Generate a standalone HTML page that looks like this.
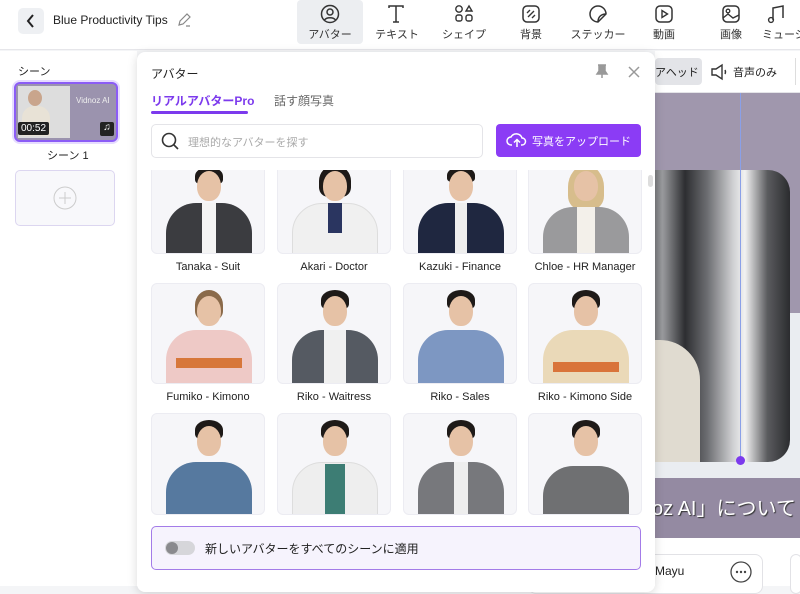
<!DOCTYPE html>
<html><head><meta charset="utf-8"><style>
*{box-sizing:border-box;margin:0;padding:0}
body{width:800px;height:586px;overflow:hidden;background:#f4f5f7;font-family:"Liberation Sans","Noto Sans CJK JP",sans-serif;position:relative;color:#222}
.abs{position:absolute}
.top{left:0;top:0;width:800px;height:50px;background:#fff;border-bottom:1px solid #e6e6ea}
.tool{position:absolute;top:0;height:44px;width:66px;text-align:center;font-size:11px;color:#333}
.tool svg{display:block;margin:4px auto 2px}
.card{position:absolute;width:114px;background:#f6f6f9;border:1px solid #ececf2;border-radius:6px;overflow:hidden}
.lbl{position:absolute;width:126px;text-align:center;font-size:11px;color:#222}
.head{position:absolute;border-radius:50% 50% 46% 46%;background:#e6c2a6}
.hair{position:absolute;background:#1e1a18;border-radius:50% 50% 30% 30%}
.body{position:absolute;border-radius:30px 30px 0 0}
</style></head><body>
<div class="abs top"></div>
<div class="abs" style="left:18px;top:8px;width:26px;height:26px;background:#eef0f3;border-radius:5px"></div>
<svg class="abs" style="left:24px;top:13px" width="14" height="16"><path d="M9 2L4 8l5 6" stroke="#222" stroke-width="2" fill="none"/></svg>
<div class="abs" style="left:53px;top:13px;font-size:12px">Blue Productivity Tips</div>
<svg class="abs" style="left:176px;top:12px" width="16" height="16"><path d="M3 13l1-4 7-7 3 3-7 7z M10 14h4" stroke="#888" stroke-width="1.2" fill="none"/></svg>
<div class="tool" style="left:297px;background:#eceef1;border-radius:4px;height:44px"><svg width="20" height="20"><circle cx="10" cy="10" r="8.5" stroke="#333" stroke-width="1.5" fill="none"/><circle cx="10" cy="8" r="3" stroke="#333" stroke-width="1.5" fill="none"/><path d="M4.5 16c2-3 9-3 11 0" stroke="#333" stroke-width="1.5" fill="none"/></svg>アバター</div>
<div class="tool" style="left:364px"><svg width="20" height="20"><path d="M2 4V2h14v2M9 2v16M6 18h6" stroke="#333" stroke-width="1.5" fill="none"/></svg>テキスト</div>
<div class="tool" style="left:431px"><svg width="20" height="20"><circle cx="5" cy="5" r="3.2" stroke="#333" stroke-width="1.4" fill="none"/><path d="M15 2l3 5h-6z" stroke="#333" stroke-width="1.4" fill="none"/><rect x="2" y="11" width="6" height="6" rx="2" stroke="#333" stroke-width="1.4" fill="none"/><rect x="12" y="11" width="6" height="6" rx="2" stroke="#333" stroke-width="1.4" fill="none"/></svg>シェイプ</div>
<div class="tool" style="left:498px"><svg width="20" height="20"><rect x="2" y="2" width="16" height="16" rx="4" stroke="#333" stroke-width="1.5" fill="none"/><path d="M7 13l6-6M6 9l3-3M11 14l3-3" stroke="#333" stroke-width="1.4"/></svg>背景</div>
<div class="tool" style="left:565px"><svg width="20" height="20"><path d="M18 10a8 8 0 1 0-8 8l8-8z M10 18c0-5 3-8 8-8" stroke="#333" stroke-width="1.5" fill="none"/></svg>ステッカー</div>
<div class="tool" style="left:631px"><svg width="20" height="20"><rect x="2" y="2" width="16" height="16" rx="4" stroke="#333" stroke-width="1.5" fill="none"/><path d="M8 6.5v7l5.5-3.5z" stroke="#333" stroke-width="1.4" fill="none"/></svg>動画</div>
<div class="tool" style="left:698px"><svg width="20" height="20"><rect x="2" y="2" width="16" height="16" rx="4" stroke="#333" stroke-width="1.5" fill="none"/><circle cx="7" cy="7" r="1.8" stroke="#333" stroke-width="1.3" fill="none"/><path d="M2 14l5-4 5 4 6-3" stroke="#333" stroke-width="1.4" fill="none"/></svg>画像</div>
<div class="tool" style="left:762px;text-align:left"><svg width="20" height="20" style="margin-left:4px"><path d="M7 16V4l10-2v12" stroke="#333" stroke-width="1.5" fill="none"/><circle cx="5" cy="16" r="2.4" stroke="#333" stroke-width="1.4" fill="none"/></svg>ミュージ</div>

<!-- left sidebar -->
<div class="abs" style="left:0;top:51px;width:137px;height:535px;background:#fff"></div>
<div class="abs" style="left:18px;top:63px;font-size:11px">シーン</div>
<div class="abs" style="left:14px;top:82px;width:104px;height:60px;border:2px solid #8b5cf6;border-radius:6px;background:#9b93ae;overflow:hidden;box-shadow:0 0 0 2px #e6dcff">
 <div class="abs" style="left:2px;top:2px;width:52px;height:52px;background:#ddd"></div>
 <div class="abs" style="left:12px;top:6px;width:14px;height:16px;border-radius:50%;background:#c9a58c"></div>
 <div class="abs" style="left:6px;top:22px;width:28px;height:30px;border-radius:12px 12px 0 0;background:#e8e2d6"></div>
 <div class="abs" style="left:60px;top:12px;font-size:8px;color:#eee">Vidnoz AI</div>
 <div class="abs" style="left:2px;top:38px;background:#222;color:#fff;font-size:10px;padding:1px 3px;border-radius:2px">00:52</div>
 <div class="abs" style="left:84px;top:38px;width:14px;height:14px;background:#222;color:#fff;font-size:10px;text-align:center;border-radius:2px">♫</div>
</div>
<div class="abs" style="left:47px;top:147px;font-size:11px">シーン 1</div>
<div class="abs" style="left:15px;top:170px;width:100px;height:56px;border:1px solid #dcd6f0;border-radius:5px;background:#f8f8fb"></div>
<svg class="abs" style="left:53px;top:186px" width="24" height="24"><circle cx="12" cy="12" r="11" stroke="#ccc" fill="none"/><path d="M12 6v12M6 12h12" stroke="#ccc"/></svg>

<!-- right area -->
<div class="abs" style="left:655px;top:51px;width:145px;height:42px;background:#fff;border-bottom:1px solid #e4e4e8"></div>
<div class="abs" style="left:655px;top:58px;width:47px;height:27px;background:#e3e4e8;border-radius:4px;font-size:11px;padding:6px 0 0 0">アヘッド</div>
<svg class="abs" style="left:710px;top:63px" width="20" height="18"><path d="M2 6h4l6-4v14l-6-4H2z" stroke="#333" stroke-width="1.4" fill="none"/><path d="M15 7q1 2 0 4" stroke="#333" stroke-width="1.4" fill="none"/></svg>
<div class="abs" style="left:733px;top:64px;font-size:11px">音声のみ</div>
<div class="abs" style="left:795px;top:58px;width:1px;height:27px;background:#ddd"></div>
<div class="abs" style="left:655px;top:93px;width:145px;height:220px;background:#a097ad"></div>
<div class="abs" style="left:655px;top:313px;width:145px;height:165px;background:#eaedf1"></div>
<div class="abs" style="left:640px;top:170px;width:150px;height:292px;border-radius:0 22px 22px 0;background:linear-gradient(90deg,#3a3b3e 0%,#9a9b9e 15%,#2d2e31 30%,#6d6e72 45%,#cfd0d2 62%,#f2f2f2 70%,#5a5b5e 85%,#2b2c2f 100%)"></div>
<div class="abs" style="left:640px;top:340px;width:60px;height:122px;border-radius:0 40px 0 0;background:#e0dbd0"></div>
<div class="abs" style="left:740px;top:93px;width:1px;height:368px;background:#8aa0e8"></div>
<div class="abs" style="left:736px;top:456px;width:9px;height:9px;border-radius:50%;background:#7c3aed"></div>
<div class="abs" style="left:655px;top:478px;width:145px;height:60px;background:#948aa2"></div>
<div class="abs" style="left:652px;top:492px;font-size:20px;color:#fff;text-shadow:1px 1px 1px #333;white-space:nowrap">oz AI」について</div>
<div class="abs" style="left:655px;top:538px;width:145px;height:48px;background:#fff"></div>
<div class="abs" style="left:528px;top:554px;width:235px;height:40px;border:1px solid #e2e2e6;border-radius:8px;background:#fff"></div>
<div class="abs" style="left:655px;top:564px;font-size:12px">Mayu</div>
<svg class="abs" style="left:730px;top:561px" width="22" height="22"><circle cx="11" cy="11" r="10" stroke="#444" stroke-width="1.3" fill="none"/><circle cx="7" cy="11" r="1.2" fill="#444"/><circle cx="11" cy="11" r="1.2" fill="#444"/><circle cx="15" cy="11" r="1.2" fill="#444"/></svg>
<div class="abs" style="left:790px;top:554px;width:12px;height:40px;border:1px solid #e2e2e6;border-radius:8px;background:#fff"></div>

<!-- panel -->
<div class="abs" style="left:137px;top:52px;width:518px;height:540px;background:#fff;border-radius:8px;box-shadow:0 2px 10px rgba(0,0,0,.15)"></div>
<div class="abs" style="left:151px;top:65px;font-size:12px">アバター</div>
<svg class="abs" style="left:595px;top:63px" width="14" height="16"><path d="M3 2h8M4 2v6l-2 3h10l-2-3V2M7 11v4" stroke="#999" stroke-width="1.5" fill="#999"/></svg>
<svg class="abs" style="left:627px;top:65px" width="14" height="14"><path d="M2 2l10 10M12 2L2 12" stroke="#999" stroke-width="1.5"/></svg>
<div class="abs" style="left:151px;top:92px;font-size:12px;font-weight:bold;color:#7c3aed">リアルアバターPro</div>
<div class="abs" style="left:151px;top:111px;width:97px;height:3px;background:#7c3aed;border-radius:2px"></div>
<div class="abs" style="left:274px;top:92px;font-size:12px;color:#666">話す顔写真</div>
<div class="abs" style="left:151px;top:124px;width:332px;height:34px;border:1px solid #e4e4e8;border-radius:5px"></div>
<svg class="abs" style="left:161px;top:132px" width="18" height="18"><circle cx="8" cy="8" r="6.5" stroke="#333" stroke-width="1.6" fill="none"/><path d="M13 13l4 4" stroke="#333" stroke-width="1.6"/></svg>
<div class="abs" style="left:188px;top:134px;font-size:11px;color:#aaa">理想的なアバターを探す</div>
<div class="abs" style="left:496px;top:124px;width:145px;height:33px;background:#8b3cf5;border-radius:4px;color:#fff;font-size:11px;padding:9px 0 0 36px">写真をアップロード</div>
<svg class="abs" style="left:506px;top:131px" width="22" height="18"><path d="M6 14H5a4 4 0 0 1 0-8 6 6 0 0 1 11 1 3.5 3.5 0 0 1 0 7h-1" stroke="#fff" stroke-width="1.5" fill="none"/><path d="M11 16V9M8 11.5l3-3 3 3" stroke="#fff" stroke-width="1.5" fill="none"/></svg>
<div class="abs" style="left:648px;top:175px;width:5px;height:12px;background:#ddd;border-radius:3px"></div>

<div class="abs" style="left:137px;top:170px;width:518px;height:345px;overflow:hidden">
<!-- row1 top -2 -->
<div class="card" style="left:14px;top:-10px;height:94px"><div class="hair" style="left:43px;top:6px;width:28px;height:18px"></div><div class="head" style="left:45px;top:10px;width:24px;height:30px"></div><div class="body" style="left:14px;top:42px;width:86px;height:52px;background:#3b3c40"></div><div class="abs" style="left:50px;top:42px;width:14px;height:52px;background:#f4f4f4"></div></div>
<div class="card" style="left:140px;top:-10px;height:94px"><div class="hair" style="left:41px;top:4px;width:32px;height:32px"></div><div class="head" style="left:45px;top:10px;width:24px;height:30px"></div><div class="body" style="left:14px;top:42px;width:86px;height:52px;background:#f0f0f0;border:1px solid #ddd"></div><div class="abs" style="left:50px;top:42px;width:14px;height:30px;background:#2a3560"></div></div>
<div class="card" style="left:266px;top:-10px;height:94px"><div class="hair" style="left:43px;top:6px;width:28px;height:16px"></div><div class="head" style="left:45px;top:10px;width:24px;height:30px"></div><div class="body" style="left:14px;top:42px;width:86px;height:52px;background:#1f2740"></div><div class="abs" style="left:51px;top:42px;width:12px;height:52px;background:#eee"></div></div>
<div class="card" style="left:391px;top:-10px;height:94px"><div class="hair" style="left:39px;top:4px;width:36px;height:44px;background:#d7bd8c"></div><div class="head" style="left:45px;top:10px;width:24px;height:30px"></div><div class="body" style="left:14px;top:46px;width:86px;height:48px;background:#9a9a9c"></div><div class="abs" style="left:48px;top:46px;width:18px;height:48px;background:#f3f0ea"></div></div>
<div class="lbl" style="left:8px;top:91px">Tanaka - Suit</div>
<div class="lbl" style="left:134px;top:91px">Akari - Doctor</div>
<div class="lbl" style="left:260px;top:91px">Kazuki - Finance</div>
<div class="lbl" style="left:385px;top:91px">Chloe - HR Manager</div>
<!-- row2 -->
<div class="card" style="left:14px;top:113px;height:101px"><div class="hair" style="left:43px;top:6px;width:28px;height:30px;background:#8a6a4a"></div><div class="head" style="left:45px;top:12px;width:24px;height:30px"></div><div class="body" style="left:14px;top:46px;width:86px;height:55px;background:#eec9c6"></div><div class="abs" style="left:24px;top:74px;width:66px;height:10px;background:#d7773a"></div></div>
<div class="card" style="left:140px;top:113px;height:101px"><div class="hair" style="left:43px;top:6px;width:28px;height:20px"></div><div class="head" style="left:45px;top:12px;width:24px;height:30px"></div><div class="body" style="left:14px;top:46px;width:86px;height:55px;background:#555a62"></div><div class="abs" style="left:46px;top:46px;width:22px;height:55px;background:#f0f0f0"></div></div>
<div class="card" style="left:266px;top:113px;height:101px"><div class="hair" style="left:43px;top:6px;width:28px;height:20px"></div><div class="head" style="left:45px;top:12px;width:24px;height:30px"></div><div class="body" style="left:14px;top:46px;width:86px;height:55px;background:#7d97c2"></div></div>
<div class="card" style="left:391px;top:113px;height:101px"><div class="hair" style="left:43px;top:6px;width:28px;height:20px"></div><div class="head" style="left:45px;top:12px;width:24px;height:30px"></div><div class="body" style="left:14px;top:46px;width:86px;height:55px;background:#ead9b8"></div><div class="abs" style="left:24px;top:78px;width:66px;height:10px;background:#d9743a"></div></div>
<div class="lbl" style="left:8px;top:221px">Fumiko - Kimono</div>
<div class="lbl" style="left:134px;top:221px">Riko - Waitress</div>
<div class="lbl" style="left:260px;top:221px">Riko - Sales</div>
<div class="lbl" style="left:385px;top:221px">Riko - Kimono Side</div>
<!-- row3 -->
<div class="card" style="left:14px;top:243px;height:102px"><div class="hair" style="left:43px;top:6px;width:28px;height:20px"></div><div class="head" style="left:45px;top:12px;width:24px;height:30px"></div><div class="body" style="left:14px;top:48px;width:86px;height:54px;background:#56799f"></div></div>
<div class="card" style="left:140px;top:243px;height:102px"><div class="hair" style="left:43px;top:6px;width:28px;height:20px"></div><div class="head" style="left:45px;top:12px;width:24px;height:30px"></div><div class="body" style="left:14px;top:48px;width:86px;height:54px;background:#eeeeee;border:1px solid #ddd"></div><div class="abs" style="left:47px;top:50px;width:20px;height:52px;background:#3d7d74"></div></div>
<div class="card" style="left:266px;top:243px;height:102px"><div class="hair" style="left:43px;top:6px;width:28px;height:20px"></div><div class="head" style="left:45px;top:12px;width:24px;height:30px"></div><div class="body" style="left:14px;top:48px;width:86px;height:54px;background:#77787c"></div><div class="abs" style="left:50px;top:48px;width:14px;height:54px;background:#eee"></div></div>
<div class="card" style="left:391px;top:243px;height:102px"><div class="hair" style="left:43px;top:6px;width:28px;height:20px"></div><div class="head" style="left:45px;top:12px;width:24px;height:30px"></div><div class="body" style="left:14px;top:52px;width:86px;height:50px;background:#6f7072"></div></div>
</div>
<div class="abs" style="left:137px;top:515px;width:518px;height:71px;background:#fff"></div>
<div class="abs" style="left:151px;top:526px;width:490px;height:44px;border:1px solid #a37be8;border-radius:5px;background:#f6f3fd"></div>
<div class="abs" style="left:165px;top:541px;width:30px;height:14px;border-radius:7px;background:#d6d6da"></div>
<div class="abs" style="left:166px;top:542px;width:12px;height:12px;border-radius:50%;background:#8a8a8e"></div>
<div class="abs" style="left:205px;top:540px;font-size:12px">新しいアバターをすべてのシーンに適用</div>
</body></html>
